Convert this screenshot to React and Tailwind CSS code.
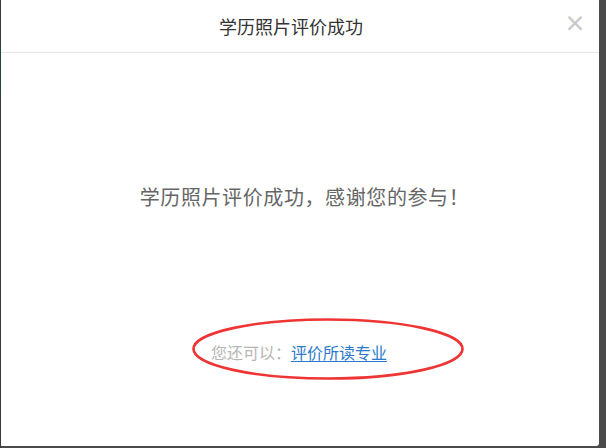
export default function App() {
  return (
    <div
      className="w-[606px] h-[448px] bg-[#4a4a4a] flex overflow-hidden"
      style={{ fontFamily: '"Microsoft YaHei", "Noto Sans CJK SC", sans-serif' }}
    >
      {/* left page edge */}
      <div className="w-[1px] h-full flex flex-col">
        <div className="h-[45px] bg-[#3a3a3a]" />
        <div className="h-[50px] bg-[#1f4a36]" />
        <div className="flex-1 bg-[#3a3a3a]" />
      </div>

      {/* modal */}
      <div className="w-[598px] h-[446px] bg-white rounded-br-[3px] flex flex-col">
        <div className="relative h-[53px] border-b border-[#e5e5e5] flex items-center justify-center pr-[18px] shrink-0">
          <span className="text-[18px] text-[#333] leading-none">学历照片评价成功</span>
          <span className="absolute right-[13px] top-[10px] text-[22px] font-bold text-[#c8c8c8] leading-none">
            ×
          </span>
        </div>

        <div className="flex-1 flex flex-col items-center">
          <p className="mt-[134px] pl-[9px] text-[20px] text-[#666] leading-none tracking-[0.6px]">
            学历照片评价成功，感谢您的参与！
          </p>

          <div className="relative mt-[111px] ml-[56px] w-[272px] h-[62px] flex items-center justify-center">
            <svg className="absolute inset-0" width="272" height="62" viewBox="0 0 272 62">
              <ellipse cx="136" cy="31" rx="134.5" ry="29.5" fill="none" stroke="#ef3434" strokeWidth="2.6" />
            </svg>
            <div className="relative mt-[6px] mr-[58px] text-[16px] leading-none">
              <span className="text-[#b5b5b5]">您还可以：</span>
              <span className="text-[#2a79cc] underline underline-offset-2">评价所读专业</span>
            </div>
          </div>
        </div>
      </div>
    </div>
  );
}
